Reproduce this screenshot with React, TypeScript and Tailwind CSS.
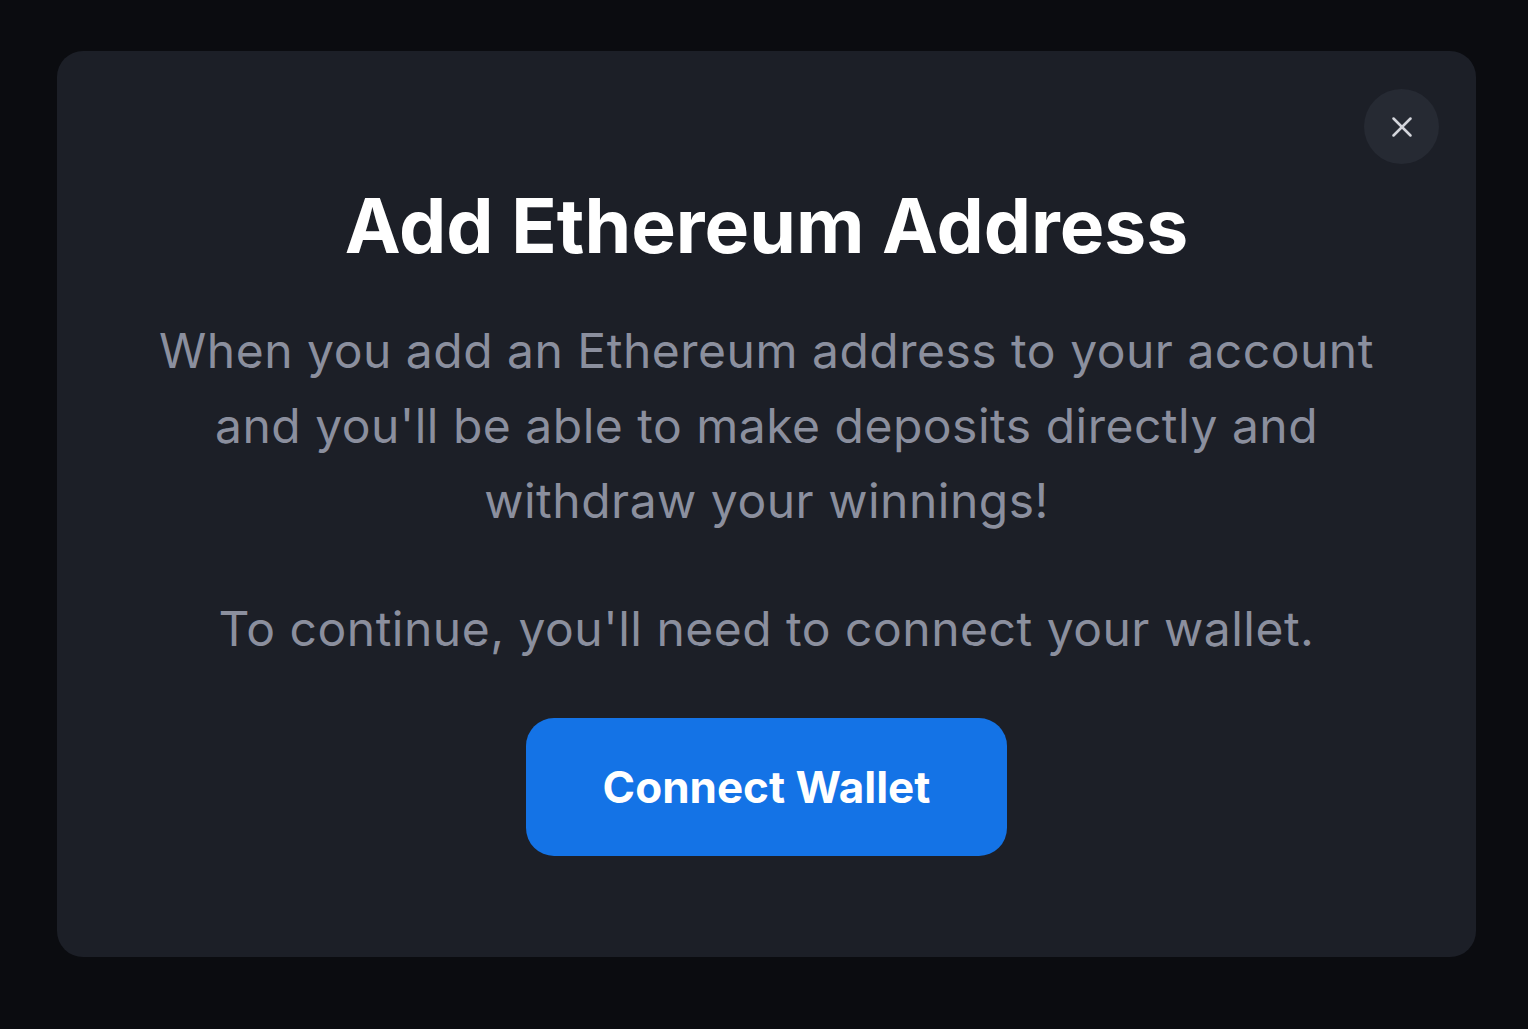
import { X } from 'lucide-react';

const AddEthereumAddressModal = () => {
    return (
        <div className="min-h-screen w-full bg-[#0b0c10] pl-[57px] pr-[52px] pt-[51px] pb-[72px]" style={{ fontFamily: 'Inter, "Noto Sans", sans-serif' }}>
            <div className="relative h-[906px] rounded-[26px] bg-[#1c1f27] flex flex-col items-center">
                <button className="absolute right-[37px] top-[38px] w-[75px] h-[75px] rounded-full bg-[#262a33] flex items-center justify-center text-[#d4d6dc]">
                    <X size={34} strokeWidth={1.8} />
                </button>
                <h2 className="mt-[137px] text-[75px] leading-none font-bold text-white">Add Ethereum Address</h2>
                <p className="mt-[50px] max-w-[1230px] text-center text-[48px] leading-[75px] tracking-[0.5px] text-[#8b8f9e]">
                    When you add an Ethereum address to your account and you'll be able to make deposits directly and withdraw your winnings!
                </p>
                <p className="mt-[53px] text-center text-[48px] leading-[75px] tracking-[0.5px] text-[#8b8f9e]">
                    To continue, you'll need to connect your wallet.
                </p>
                <button className="mt-[52px] w-[481px] h-[138px] rounded-[28px] bg-[#1473e6] text-white text-[44px] font-bold">
                    Connect Wallet
                </button>
            </div>
        </div>
    );
};

export default function App() {
    return <AddEthereumAddressModal />;
}
